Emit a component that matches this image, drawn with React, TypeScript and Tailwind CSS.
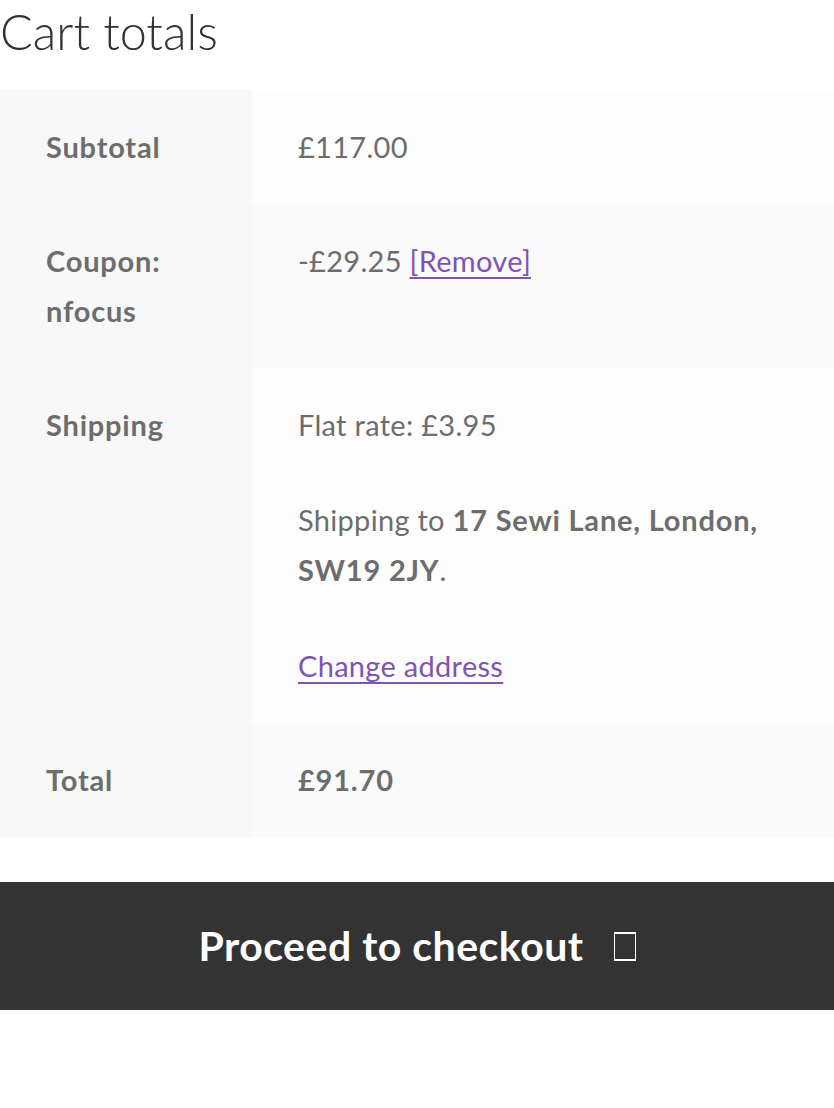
import React from 'react';

const font = { fontFamily: '"Lato", "Noto Sans", sans-serif' };

const Row: React.FC<{ label: React.ReactNode; even?: boolean; children: React.ReactNode }> = ({ label, even, children }) => (
  <div className="flex">
    <div className="w-[252px] shrink-0 bg-[#f8f8f8] px-[46px] py-[32px] font-bold tracking-[0.8px]">{label}</div>
    <div className={`flex-1 px-[46px] py-[32px] ${even ? 'bg-[#fafafa]' : 'bg-[#fdfdfd]'}`}>{children}</div>
  </div>
);

const App: React.FC = () => {
  return (
    <div className="w-[834px] h-[1108px] bg-white overflow-hidden" style={font}>
      <h2 className="h-[90px] pt-[3px] text-[48.5px] font-light leading-[56px] text-[#333333]">Cart totals</h2>

      {/* Totals table */}
      <div className="text-[29px] leading-[50px] tracking-[0.3px] text-[#6d6d6d]">
        <Row label="Subtotal">£117.00</Row>
        <Row label={<>Coupon:<br />nfocus</>} even>
          -£29.25{' '}
          <a href="#" className="text-[#7f54b3] underline underline-offset-[5px]">[Remove]</a>
        </Row>
        <Row label="Shipping">
          <p>Flat rate: £3.95</p>
          <p className="mt-[45px]">
            Shipping to <strong className="font-bold tracking-[0.8px]">17 Sewi Lane, London, SW19 2JY</strong>.
          </p>
          <p className="mt-[46px]">
            <a href="#" className="text-[#7f54b3] underline underline-offset-[5px]">Change address</a>
          </p>
        </Row>
        <Row label="Total" even>
          <strong className="font-bold tracking-[0.8px]">£91.70</strong>
        </Row>
      </div>

      <button className="mt-[45px] flex h-[128px] w-full items-center justify-center bg-[#333333] text-[41px] font-bold tracking-[0.5px] text-white">
        Proceed to checkout
        <span className="ml-[30px] inline-block h-[29px] w-[22px] border-x border-y-2 border-white" />
      </button>
    </div>
  );
};

export default App;
